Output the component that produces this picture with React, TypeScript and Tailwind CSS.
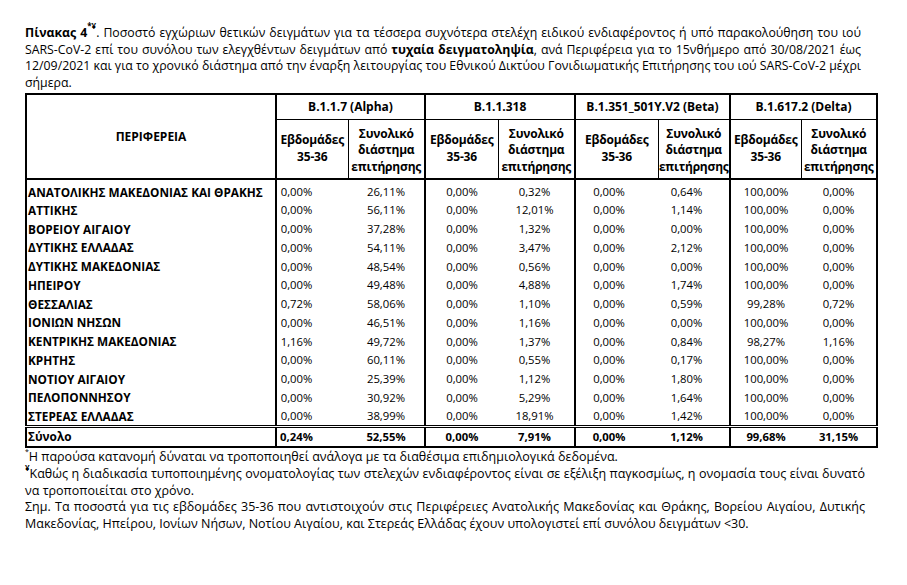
/** Πίνακας 4 — ποσοστά στελεχών ανά Περιφέρεια */

const rows: string[][] = [
  ['ΑΝΑΤΟΛΙΚΗΣ ΜΑΚΕΔΟΝΙΑΣ ΚΑΙ ΘΡΑΚΗΣ', '0,00%', '26,11%', '0,00%', '0,32%', '0,00%', '0,64%', '100,00%', '0,00%'],
  ['ΑΤΤΙΚΗΣ', '0,00%', '56,11%', '0,00%', '12,01%', '0,00%', '1,14%', '100,00%', '0,00%'],
  ['ΒΟΡΕΙΟΥ ΑΙΓΑΙΟΥ', '0,00%', '37,28%', '0,00%', '1,32%', '0,00%', '0,00%', '100,00%', '0,00%'],
  ['ΔΥΤΙΚΗΣ ΕΛΛΑΔΑΣ', '0,00%', '54,11%', '0,00%', '3,47%', '0,00%', '2,12%', '100,00%', '0,00%'],
  ['ΔΥΤΙΚΗΣ ΜΑΚΕΔΟΝΙΑΣ', '0,00%', '48,54%', '0,00%', '0,56%', '0,00%', '0,00%', '100,00%', '0,00%'],
  ['ΗΠΕΙΡΟΥ', '0,00%', '49,48%', '0,00%', '4,88%', '0,00%', '1,74%', '100,00%', '0,00%'],
  ['ΘΕΣΣΑΛΙΑΣ', '0,72%', '58,06%', '0,00%', '1,10%', '0,00%', '0,59%', '99,28%', '0,72%'],
  ['ΙΟΝΙΩΝ ΝΗΣΩΝ', '0,00%', '46,51%', '0,00%', '1,16%', '0,00%', '0,00%', '100,00%', '0,00%'],
  ['ΚΕΝΤΡΙΚΗΣ ΜΑΚΕΔΟΝΙΑΣ', '1,16%', '49,72%', '0,00%', '1,37%', '0,00%', '0,84%', '98,27%', '1,16%'],
  ['ΚΡΗΤΗΣ', '0,00%', '60,11%', '0,00%', '0,55%', '0,00%', '0,17%', '100,00%', '0,00%'],
  ['ΝΟΤΙΟΥ ΑΙΓΑΙΟΥ', '0,00%', '25,39%', '0,00%', '1,12%', '0,00%', '1,80%', '100,00%', '0,00%'],
  ['ΠΕΛΟΠΟΝΝΗΣΟΥ', '0,00%', '30,92%', '0,00%', '5,29%', '0,00%', '1,64%', '100,00%', '0,00%'],
  ['ΣΤΕΡΕΑΣ ΕΛΛΑΔΑΣ', '0,00%', '38,99%', '0,00%', '18,91%', '0,00%', '1,42%', '100,00%', '0,00%'],
];
const total = ['Σύνολο', '0,24%', '52,55%', '0,00%', '7,91%', '0,00%', '1,12%', '99,68%', '31,15%'];

const groups = ['B.1.1.7 (Alpha)', 'B.1.1.318', 'B.1.351_501Y.V2 (Beta)', 'B.1.617.2 (Delta)'];
const widths = ['w-[250px]', 'w-[72px]', 'w-[77px]', 'w-[73px]', 'w-[77px]', 'w-[83px]', 'w-[72px]', 'w-[71px]', 'w-[76px]'];
// values in the body sit a bit left of centre in a few columns
const pad = ['pr-[32px]', '', '', 'pr-[3px]', 'pr-[16px]', 'pr-[14px]', '', ''];

const J = 'block whitespace-nowrap [text-align-last:justify] text-justify';

export default function App() {
  return (
    <div className="w-[907px] h-[585px] bg-white text-black font-['Open_Sans',Arial,sans-serif] pl-[25px] pt-[25px] overflow-hidden">
      {/* caption */}
      <div className="w-[836px] text-[12.3px] leading-[16.5px]">
        <span className={J}><b>Πίνακας 4<sup className="text-[8px] align-[4px]">*¥</sup></b>. Ποσοστό εγχώριων θετικών δειγμάτων για τα τέσσερα συχνότερα στελέχη ειδικού ενδιαφέροντος ή υπό παρακολούθηση του ιού</span>
        <span className={J}>SARS-CoV-2 επί του συνόλου των ελεγχθέντων δειγμάτων από <b>τυχαία δειγματοληψία</b>, ανά Περιφέρεια για το 15νθήμερο από 30/08/2021 έως</span>
        <span className={J}>12/09/2021 και για το χρονικό διάστημα από την έναρξη λειτουργίας του Εθνικού Δικτύου Γονιδιωματικής Επιτήρησης του ιού SARS-CoV-2 μέχρι</span>
        <span className="block">σήμερα.</span>
      </div>

      {/* table */}
      <table className="mt-[2px] w-[851px] table-fixed border-collapse border-2 border-black text-[11.3px]">
        <colgroup>
          {widths.map((w, i) => <col key={i} className={w} />)}
        </colgroup>
        <thead>
          <tr className="h-[25px]">
            <th rowSpan={2} className="border-2 border-black text-[12px] font-bold text-center">ΠΕΡΙΦΕΡΕΙΑ</th>
            {groups.map(g => (
              <th key={g} colSpan={2} className="border-x-2 border-b border-black text-[12px] font-bold text-center whitespace-nowrap">{g}</th>
            ))}
          </tr>
          <tr className="h-[60px]">
            {groups.map(g => [
              <th key={g + 'a'} className="border-l-2 border-r border-b-2 border-black text-[12px] leading-[16.5px] font-bold text-center p-0 tracking-[-0.2px]">Εβδομάδες<br />35-36</th>,
              <th key={g + 'b'} className="border-r-2 border-l border-b-2 border-black text-[12px] leading-[16.5px] font-bold text-center p-0 pt-[3px] tracking-[-0.2px]">Συνολικό<br />διάστημα<br />επιτήρησης</th>,
            ])}
          </tr>
        </thead>
        <tbody>
          {rows.map((r, ri) => (
            <tr key={r[0]} className={ri === 0 ? 'h-[22.3px]' : 'h-[18.77px]'}>
              <td className={`border-r-2 border-black font-bold text-[11.8px] whitespace-nowrap pl-[1px] p-0 ${ri === 0 ? 'pt-[3.5px]' : ''}`}>{r[0]}</td>
              {r.slice(1).map((v, i) => (
                <td key={i} className={`text-center p-0 ${pad[i]} ${i % 2 === 0 ? 'border-l-2' : 'border-r-2'} border-black ${ri === 0 ? 'pt-[3.5px]' : ''}`}>{v}</td>
              ))}
            </tr>
          ))}
          <tr className="h-[19px] font-bold">
            <td className="border-t-[3px] border-double border-r-2 border-black pl-[1px] p-0 text-[11.8px]">{total[0]}</td>
            {total.slice(1).map((v, i) => (
              <td key={i} className={`text-center p-0 ${pad[i]} border-t-[3px] border-double ${i % 2 === 0 ? 'border-l-2' : 'border-r-2'} border-black`}>{v}</td>
            ))}
          </tr>
        </tbody>
      </table>

      {/* footnotes */}
      <div className="w-[840px] text-[12.5px] leading-[16.8px] mt-[1px]">
        <span className="block whitespace-nowrap"><sup className="text-[7px] align-[4px]">*</sup>Η παρούσα κατανομή δύναται να τροποποιηθεί ανάλογα με τα διαθέσιμα επιδημιολογικά δεδομένα.</span>
        <span className={J}><sup className="text-[8px] align-[3px] font-bold">¥</sup>Καθώς η διαδικασία τυποποιημένης ονοματολογίας των στελεχών ενδιαφέροντος είναι σε εξέλιξη παγκοσμίως, η ονομασία τους είναι δυνατό</span>
        <span className="block whitespace-nowrap">να τροποποιείται στο χρόνο.</span>
        <span className={J}>Σημ. Τα ποσοστά για τις εβδομάδες 35-36 που αντιστοιχούν στις Περιφέρειες Ανατολικής Μακεδονίας και Θράκης, Βορείου Αιγαίου, Δυτικής</span>
        <span className="block whitespace-nowrap">Μακεδονίας, Ηπείρου, Ιονίων Νήσων, Νοτίου Αιγαίου, και Στερεάς Ελλάδας έχουν υπολογιστεί επί συνόλου δειγμάτων &lt;30.</span>
      </div>
    </div>
  );
}
